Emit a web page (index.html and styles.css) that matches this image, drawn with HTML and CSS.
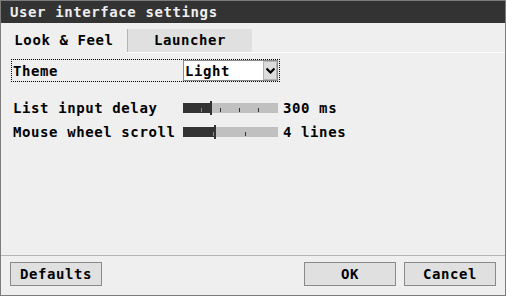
FILE: index.html
```html
<!DOCTYPE html>
<html>
<head>
<meta charset="utf-8">
<link rel="stylesheet" href="styles.css">
</head>
<body>
<div class="window">
  <div class="titlebar">User interface settings</div>
  <div class="tabs">
    <div class="tab active">Look &amp; Feel</div>
    <div class="tab">Launcher</div>
  </div>
  <div class="panel">
    <div class="theme-row">
      <span class="label">Theme</span>
      <div class="select">
        <span class="select-value">Light</span>
        <span class="select-btn">
          <svg width="9" height="7" viewBox="0 0 9 7"><path d="M0.5 1.5 L4.5 5.5 L8.5 1.5" fill="none" stroke="#000" stroke-width="2.2"/></svg>
        </span>
      </div>
    </div>
    <div class="slider-row">
      <span class="label">List input delay</span>
      <div class="track">
        <div class="fill" style="width:27px"></div>
        <div class="tick light" style="left:18px"></div>
        <div class="tick" style="left:37px"></div>
        <div class="tick" style="left:56px"></div>
        <div class="tick" style="left:75px"></div>
        <div class="thumb" style="left:27px"></div>
      </div>
      <span class="value">300 ms</span>
    </div>
    <div class="slider-row">
      <span class="label">Mouse wheel scroll</span>
      <div class="track">
        <div class="fill" style="width:31px"></div>
        <div class="tick light" style="left:30px"></div>
        <div class="tick" style="left:62px"></div>
        <div class="thumb" style="left:31px"></div>
      </div>
      <span class="value">4 lines</span>
    </div>
  </div>
  <div class="footer">
    <button class="btn">Defaults</button>
    <div class="spacer"></div>
    <button class="btn">OK</button>
    <button class="btn">Cancel</button>
  </div>
</div>
</body>
</html>
```
FILE: styles.css
```css
html, body {
  margin: 0;
  padding: 0;
  background: #efefef;
}
.window {
  width: 506px;
  height: 296px;
  box-sizing: border-box;
  border: 1px solid #7c7c7c;
  background: #efefef;
  display: flex;
  flex-direction: column;
  font-family: "DejaVu Sans Mono", monospace;
  font-weight: bold;
  font-size: 14px;
  letter-spacing: 0.6px;
  color: #000;
}
.titlebar {
  height: 22px;
  line-height: 22px;
  background: #333;
  color: #eee;
  padding-left: 9px;
}
.tabs {
  margin-top: 6px;
  display: flex;
  height: 23px;
  border-bottom: 1px solid #fff;
}
.tab {
  width: 124px;
  height: 23px;
  line-height: 23px;
  text-align: center;
  background: #e0e0e0;
  border-left: 1px solid #b4b4b4;
}
.tab.active {
  width: 126px;
  height: 24px;
  margin-bottom: -1px;
  background: #efefef;
  border-left: none;
}
.panel {
  padding: 6px 0 0 10px;
}
.theme-row {
  width: 267px;
  height: 21px;
  border: 1px dotted #000;
  display: flex;
  align-items: center;
}
.theme-row .label {
  width: 170px;
  padding-left: 1px;
}
.select {
  width: 93px;
  height: 19px;
  border: 1px solid #8a8a8a;
  background: #fff;
  display: flex;
  align-items: center;
}
.select-value {
  flex: 1;
  padding-left: 1px;
}
.select-btn {
  width: 12px;
  height: 17px;
  border: 1px solid #b4b4b4;
  background: #dcdcdc;
  display: flex;
  align-items: center;
  justify-content: center;
}
.slider-row {
  height: 24px;
  display: flex;
  align-items: center;
  padding-left: 2px;
}
.theme-row + .slider-row {
  margin-top: 14px;
}
.slider-row .label {
  width: 170px;
}
.track {
  position: relative;
  width: 95px;
  height: 10px;
  background: #c0c0c0;
}
.fill {
  height: 10px;
  background: #333;
}
.tick {
  position: absolute;
  top: 5px;
  width: 1px;
  height: 4px;
  background: #333;
}
.tick.light {
  background: #8a8a8a;
}
.thumb {
  position: absolute;
  top: -2px;
  width: 2px;
  height: 14px;
  background: #333;
}
.value {
  margin-left: 5px;
}
.footer {
  margin-top: auto;
  border-top: 1px solid #b4b4b4;
  padding: 6px 9px 9px 9px;
  display: flex;
  gap: 8px;
}
.spacer {
  flex: 1;
}
.btn {
  width: 92px;
  height: 24px;
  box-sizing: border-box;
  border: 1px solid #8a8a8a;
  background: #e0e0e0;
  font: inherit;
  letter-spacing: inherit;
  color: #000;
  padding: 0;
  margin: 0;
}
```
